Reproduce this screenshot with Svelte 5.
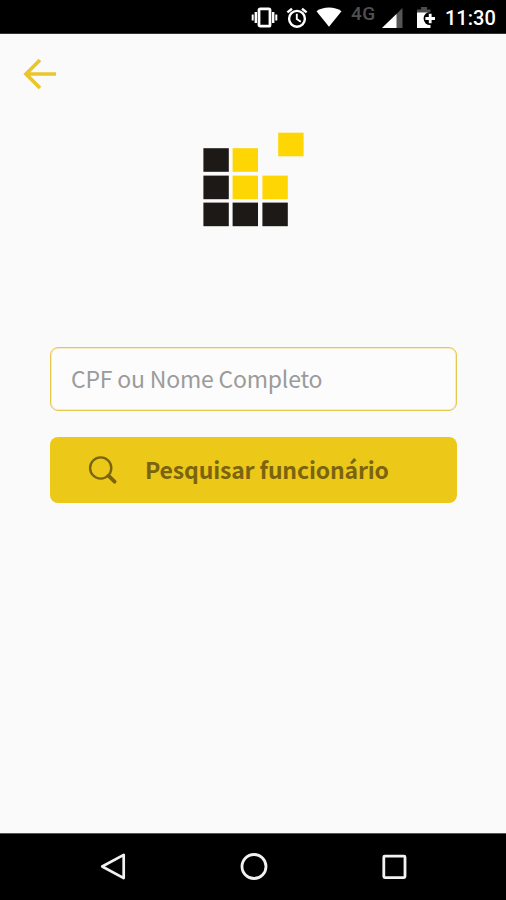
<script>
  let query = $state("");

  // Logo tiles, in the logo's own 102x95 space.
  const tiles = [
    { x: 75.2, y: 0.7, gold: true },
    { x: 0.4, y: 16.2 },
    { x: 29.6, y: 16.2, gold: true },
    { x: 0.4, y: 43.6 },
    { x: 29.6, y: 43.6, gold: true },
    { x: 59.4, y: 43.6, gold: true },
    { x: 0.4, y: 70.6 },
    { x: 29.6, y: 70.6 },
    { x: 59.4, y: 70.6 },
  ];
</script>

<div class="screen">
  <header class="status">
    <svg class="vibrate" width="28" height="24" viewBox="0 0 28 24">
      <rect x="8" y="3.8" width="11" height="17.4" rx="1.2" fill="none" stroke="#fff" stroke-width="2.8" />
      <path d="M4.8 7v11M22.2 7v11" stroke="#fff" stroke-width="2.4" />
      <path d="M1.7 9.500v6M25.3 9.500v6" stroke="#fff" stroke-width="2" />
    </svg>
    <svg class="alarm" width="22" height="22" viewBox="0 0 22 22">
      <circle cx="11" cy="11.800" r="7.9" fill="none" stroke="#fff" stroke-width="2.4" />
      <path d="M1.4 5.4 6 1.7M20.6 5.4 16 1.7" stroke="#fff" stroke-width="2.4" />
      <path d="M10.8 6.800v5.300l4 2.600" fill="none" stroke="#fff" stroke-width="1.9" />
    </svg>
    <svg class="wifi" width="26" height="20" viewBox="0 0 26 20">
      <path d="M.5 4.2C7.3-.7 18.7-.7 25.5 4.2L13 19.8z" fill="#fff" />
    </svg>
    <span class="network">4G</span>
    <svg class="signal" width="21" height="20" viewBox="0 0 21 20">
      <path d="M0 20 20.5 0V20z" fill="#555" />
      <path d="M0 20 14.5 6V20z" fill="#fff" />
    </svg>
    <svg class="battery" width="20" height="22" viewBox="0 0 20 22">
      <path d="M1 2.4h4V0h6v2.4h3.5V6H1z" fill="#4c4c4c" />
      <path d="M1 5.500h13.500V21H1z" fill="#fff" />
      <circle cx="14.200" cy="11.500" r="6.600" fill="#000" />
      <path d="M14.200 6.700v9.600M9.400 11.500H19" stroke="#fff" stroke-width="2.800" />
    </svg>
    <time>11:30</time>
  </header>

  <main>
    <button class="back" aria-label="Voltar">
      <svg width="34" height="34" viewBox="0 0 34 34">
        <path d="M17 3 3 17l14 14M3.5 17H33" fill="none" stroke="#e9c62c" stroke-width="3.7" />
      </svg>
    </button>

    <svg class="logo" width="102" height="95" viewBox="0 0 102 95">
      {#each tiles as tile}
        <rect x={tile.x} y={tile.y} width="25.4" height="23.6" class:gold={tile.gold} />
      {/each}
    </svg>

    <form onsubmit={(ev) => ev.preventDefault()}>
      <input type="text" placeholder="CPF ou Nome Completo" bind:value={query} />
      <button class="search">
        <svg width="30" height="30" viewBox="0 0 30 30">
          <circle cx="12.7" cy="13" r="10.6" fill="none" stroke="#7b6410" stroke-width="2.4" />
          <path d="m20.4 20.7 6.2 6" stroke="#7b6410" stroke-width="3.8" stroke-linecap="round" />
        </svg>
        <span>Pesquisar funcionário</span>
      </button>
    </form>
  </main>

  <nav>
    <svg width="28" height="30" viewBox="0 0 28 30">
      <path d="M3.2 14.5 24.7 2.900v23.200z" fill="none" stroke="#f2f2f2" stroke-width="2.7" stroke-linejoin="round" />
    </svg>
    <svg width="28" height="30" viewBox="0 0 28 30">
      <circle cx="14" cy="14.5" r="12" fill="none" stroke="#f2f2f2" stroke-width="2.8" />
    </svg>
    <svg width="28" height="30" viewBox="0 0 28 30">
      <rect x="3.8" y="4.2" width="21.2" height="21.4" rx="1" fill="none" stroke="#f2f2f2" stroke-width="2.8" />
    </svg>
  </nav>
</div>

<style>
  :global(body) {
    background: #fafafa;
  }

  .screen {
    display: flex;
    flex-direction: column;
    width: 506px;
    height: 900px;
    background: #fafafa;
    font-family: "Noto Sans CJK SC", "Open Sans", sans-serif;
  }

  svg {
    display: block;
    flex: none;
  }

  button {
    padding: 0;
    border: 0;
    background: none;
    font: inherit;
  }

  .status {
    display: flex;
    box-sizing: border-box;
    height: 34px;
    padding: 5px 0 0 251px;
    border-bottom: 1px solid #333;
    background: #000;
    color: #fff;
    font-family: Roboto, sans-serif;
    white-space: nowrap;
  }
  .alarm {
    margin: 2px 0 0 7px;
  }
  .wifi {
    margin: 2px 0 0 8px;
  }
  .network {
    width: 26px;
    margin-left: 9px;
    color: #505050;
    font-size: 19px;
    font-weight: 500;
    line-height: 17px;
    letter-spacing: 0.5px;
  }
  .signal {
    margin: 3px 0 0 5px;
  }
  .battery {
    margin: 2px 0 0 13px;
  }
  time {
    margin-left: 9px;
    font-size: 20px;
    font-weight: 500;
    line-height: 26px;
  }

  main {
    display: flex;
    flex: 1;
    flex-direction: column;
    align-items: flex-start;
  }
  .back {
    margin: 23px 0 0 23px;
  }
  .logo {
    margin: 41px 0 0 203px;
  }
  .logo rect {
    fill: #1d1917;
  }
  .logo rect.gold {
    fill: #fdd604;
  }

  form {
    display: flex;
    flex-direction: column;
    gap: 26px;
    width: 407px;
    margin: 120px 0 0 50px;
  }
  input {
    box-sizing: border-box;
    width: 100%;
    height: 64px;
    padding: 0 20px 3px;
    border: 1px solid #e6c94e;
    border-radius: 8px;
    outline: 0;
    background: #fcfcfc;
    box-shadow: inset 0 0 0 1px #f5ebc4;
    color: #555;
    font: 23px "Noto Sans CJK SC", "Open Sans", sans-serif;
    letter-spacing: -0.2px;
  }
  input::placeholder {
    color: #9b9b9b;
    opacity: 1;
  }
  .search {
    display: flex;
    align-items: center;
    height: 66px;
    padding-left: 38px;
    border-radius: 8px;
    background: #ecc818;
    color: #7b6410;
    font-size: 23px;
    font-weight: 700;
    letter-spacing: -0.17px;
    white-space: nowrap;
  }
  .search span {
    margin-left: 27px;
    padding-bottom: 2px;
  }

  nav {
    display: flex;
    box-sizing: border-box;
    height: 67px;
    padding: 18px 0 0 99px;
    gap: 112.5px;
    border-top: 1px solid #555;
    background: #000;
  }
</style>
